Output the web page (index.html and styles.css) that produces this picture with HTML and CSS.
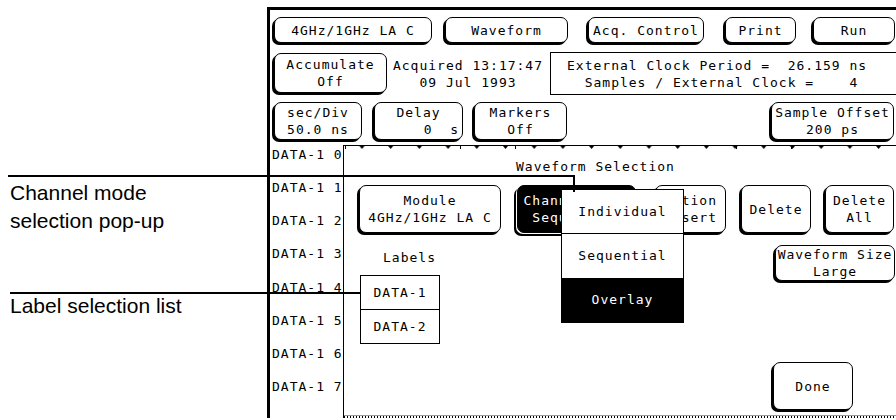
FILE: index.html
```html
<!DOCTYPE html>
<html lang="en">
<head>
    <meta charset="UTF-8">
    <meta name="viewport" content="width=device-width, initial-scale=1.0">
    <title>Waveform Selection</title>
    <link rel="stylesheet" href="styles.css">
</head>
<body>
    <div class="page">
        <!-- callout captions on the left -->
        <div class="captions">
            <p class="cap">Channel mode<br>selection pop-up</p>
            <p class="cap cap-label">Label selection list</p>
        </div>

        <div class="screen">
            <div class="row row-menu">
                <div class="btn b-module">4GHz/1GHz LA C</div>
                <div class="btn b-wave">Waveform</div>
                <div class="btn b-acq">Acq. Control</div>
                <div class="btn b-print">Print</div>
                <div class="btn b-run">Run</div>
            </div>

            <div class="row row-status">
                <div class="btn b-accum"><span>Accumulate</span><span>Off</span></div>
                <div class="acquired"><span>Acquired 13:17:47</span><span>09 Jul 1993</span></div>
                <div class="ext-clock"><span>External Clock Period =  26.159 ns</span><span>  Samples / External Clock =    4</span></div>
            </div>

            <div class="row row-time">
                <div class="btn b-sec"><span>sec/Div</span><span>50.0 ns</span></div>
                <div class="btn b-delay"><span>Delay</span><span class="delay-val">0  s</span></div>
                <div class="btn b-markers"><span>Markers</span><span>Off</span></div>
                <div class="btn b-offset"><span>Sample Offset</span><span>200 ps</span></div>
            </div>

            <div class="main">
                <div class="labels">
                    <div class="lab">DATA-1 0</div>
                    <div class="lab">DATA-1 1</div>
                    <div class="lab">DATA-1 2</div>
                    <div class="lab">DATA-1 3</div>
                    <div class="lab">DATA-1 4</div>
                    <div class="lab">DATA-1 5</div>
                    <div class="lab">DATA-1 6</div>
                    <div class="lab">DATA-1 7</div>
                </div>

                <div class="wave">
                    <svg class="ruler" width="552" height="4" viewBox="0 0 552 4">
                        <defs>
                            <pattern id="ticks" x="15.5" y="0" width="28.7" height="4" patternUnits="userSpaceOnUse">
                                <path d="M0 1h5l-2.5 3z" fill="#000"/>
                            </pattern>
                        </defs>
                        <rect x="0" y="0" width="552" height="1" fill="#000"/>
                        <rect x="0" y="1" width="552" height="3" fill="url(#ticks)"/>
                        <rect x="1" y="0" width="1" height="4" fill="#000"/>
                        <rect x="116" y="0" width="1" height="4" fill="#000"/>
                        <rect x="171" y="0" width="1" height="4" fill="#000"/>
                        <rect x="392" y="0" width="1" height="4" fill="#000"/>
                        <rect x="447" y="0" width="1" height="4" fill="#000"/>
                    </svg>

                    <div class="dialog">
                        <div class="dlg-title">Waveform Selection</div>

                        <div class="dlg-row">
                            <div class="btn d-module"><span>Module</span><span>4GHz/1GHz LA C</span></div>
                            <div class="btn btn-on d-chan"><span>Channel Mode</span><span>Sequential</span></div>
                            <div class="btn d-insert"><span>Action</span><span>Insert</span></div>
                            <div class="btn d-delete">Delete</div>
                            <div class="btn d-delall"><span>Delete</span><span>All</span></div>
                        </div>

                        <div class="dlg-body">
                            <div class="dlg-left">
                                <div class="labels-title">Labels</div>
                                <div class="lablist">
                                    <div class="lablist-item">DATA-1</div>
                                    <div class="lablist-item">DATA-2</div>
                                </div>
                            </div>
                            <div class="dlg-right">
                                <div class="btn d-size"><span>Waveform Size</span><span>Large</span></div>
                                <div class="btn d-done">Done</div>
                            </div>
                        </div>

                        <div class="hatch"></div>

                        <!-- channel mode pop-up -->
                        <div class="popup">
                            <div class="popup-item">Individual</div>
                            <div class="popup-item">Sequential</div>
                            <div class="popup-item popup-sel">Overlay</div>
                        </div>
                    </div>
                </div>
            </div>
        </div>

        <!-- leader lines of the callouts -->
        <div class="lead lead-mode"></div>
        <div class="lead lead-mode-down"></div>
        <div class="lead lead-label"></div>
    </div>
</body>
</html>
```

FILE: styles.css
```css
body {
    margin: 0;
    background-color: #fff;
    color: #000;
    font-family: "DejaVu Sans Mono", monospace;
    font-size: 13px;
    letter-spacing: 1px;
}

.page {
    position: relative;
    display: flex;
    width: 896px;
    height: 420px;
    overflow: hidden;
}

/* captions */
.captions {
    width: 267px;
    flex-shrink: 0;
    box-sizing: border-box;
    padding: 179px 0 0 10px;
}

.cap {
    margin: 0;
    font-family: "Liberation Sans", Arial, sans-serif;
    font-size: 21px;
    line-height: 28px;
    letter-spacing: 0;
}

.cap-label {
    margin-top: 57px;
}

.lead {
    position: absolute;
    background-color: #000;
}

.lead-mode {
    left: 8px;
    top: 175px;
    width: 567px;
    height: 2px;
}

.lead-mode-down {
    left: 573px;
    top: 175px;
    width: 2px;
    height: 17px;
}

.lead-label {
    left: 10px;
    top: 292px;
    width: 350px;
    height: 2px;
}

/* instrument screen */
.screen {
    flex: 1;
    display: flex;
    flex-direction: column;
    box-sizing: border-box;
    height: 411px;
    margin-top: 7px;
    border-top: 3px solid #000;
    border-left: 3px solid #000;
    overflow: hidden;
}

.row {
    display: flex;
    flex-shrink: 0;
}

.btn {
    box-sizing: border-box;
    display: flex;
    flex-direction: column;
    align-items: center;
    justify-content: center;
    background-color: #fff;
    border: 1px solid #000;
    border-radius: 7px;
    box-shadow: -2px 2px 0 #000;
    line-height: 17px;
    white-space: pre;
    flex-shrink: 0;
}

.btn-on {
    background-color: #000;
    color: #fff;
    box-shadow: -1px 1px 0 #fff, -3px 3px 0 #000;
}

.row-menu {
    margin-top: 7px;
    height: 26px;
}

.row-menu .btn { height: 26px; }
.b-module { margin-left: 4px; width: 158px; }
.b-wave { margin-left: 13px; width: 123px; }
.b-acq { margin-left: 20px; width: 116px; }
.b-print { margin-left: 21px; width: 71px; }
.b-run { margin-left: 17px; width: 82px; }

.row-status {
    margin-top: 9px;
    height: 43px;
}

.b-accum {
    margin: 1px 0 0 4px;
    width: 113px;
    height: 40px;
}

.acquired {
    display: flex;
    flex-direction: column;
    justify-content: center;
    align-items: center;
    margin-left: 2px;
    width: 158px;
    line-height: 17px;
}

.ext-clock {
    flex: 1;
    display: flex;
    flex-direction: column;
    justify-content: center;
    margin-left: 3px;
    padding-left: 16px;
    border: 1px solid #000;
    border-right: none;
    line-height: 17px;
    white-space: pre;
}

.row-time {
    margin-top: 7px;
    height: 38px;
}

.row-time .btn { height: 38px; }
.b-sec { margin-left: 4px; width: 88px; }
.b-delay { margin-left: 12px; width: 89px; }
.b-markers { margin-left: 11px; width: 93px; }
.b-offset { margin-left: auto; margin-right: 2px; width: 123px; }

.delay-val {
    align-self: flex-end;
    padding-right: 3px;
}

/* label column and waveform area */
.main {
    flex: 1;
    display: flex;
    margin-top: 5px;
}

.labels {
    width: 73px;
    padding: 3px 0 0 2px;
    box-sizing: border-box;
    border-right: 1px solid #000;
    flex-shrink: 0;
    width: 74px;
    overflow: hidden;
}

.lab {
    height: 33.15px;
    line-height: 14px;
    white-space: pre;
}

.wave {
    flex: 1;
    display: flex;
    flex-direction: column;
}

.ruler {
    display: block;
    flex-shrink: 0;
}

.dialog {
    position: relative;
    flex: 1;
    display: flex;
    flex-direction: column;
}

.dlg-title {
    padding: 9px 0 0 172px;
    line-height: 17px;
}

.dlg-row {
    display: flex;
    margin-top: 10px;
    height: 48px;
    flex-shrink: 0;
}

.dlg-row .btn { height: 48px; }
.d-module { margin-left: 15px; width: 142px; }
.d-chan { margin-left: 16px; width: 119px; }
.d-insert { margin-left: 19px; width: 71px; }
.d-delete { margin-left: 15px; width: 70px; }
.d-delall { margin-left: 14px; width: 69px; }

.dlg-body {
    flex: 1;
    display: flex;
}

.dlg-left {
    margin-left: 16px;
}

.labels-title {
    margin-top: 16px;
    padding-left: 23px;
    line-height: 17px;
}

.lablist {
    margin-top: 9px;
    width: 80px;
    border: 1px solid #000;
    box-sizing: border-box;
}

.lablist-item {
    height: 33px;
    line-height: 33px;
    text-align: center;
}

.lablist-item + .lablist-item {
    border-top: 1px solid #000;
}

.dlg-right {
    margin-left: auto;
    display: flex;
    flex-direction: column;
    align-items: flex-end;
}

.d-size {
    margin: 12px 1px 0 0;
    width: 120px;
    height: 36px;
}

.d-done {
    margin: 81px 43px 0 0;
    width: 80px;
    height: 48px;
}

.hatch {
    height: 2px;
    flex-shrink: 0;
    border-top: 1px solid #999;
    background: repeating-linear-gradient(90deg, #000 0 1px, #fff 1px 3px);
}

/* channel mode pop-up */
.popup {
    position: absolute;
    left: 217px;
    top: 40px;
    width: 123px;
    box-sizing: border-box;
    border: 1px solid #000;
    background-color: #fff;
}

.popup-item {
    height: 44px;
    line-height: 44px;
    text-align: center;
}

.popup-item:first-child {
    height: 43px;
    line-height: 43px;
    border-bottom: 1px solid #000;
}

.popup-sel {
    background-color: #000;
    color: #fff;
}
```
